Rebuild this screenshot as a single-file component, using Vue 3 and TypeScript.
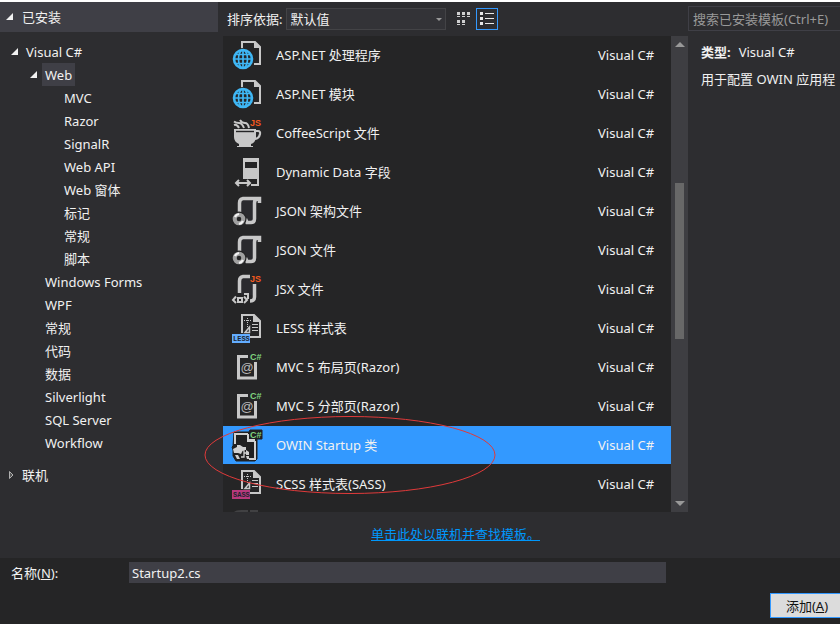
<script setup lang="ts">
import { ref } from 'vue'

type IconKind =
  | 'globe' | 'coffee' | 'field' | 'json' | 'jsx' | 'less'
  | 'razor' | 'owin' | 'sass'

interface Template { name: string; icon: IconKind }
interface TreeNode { label: string; level: number; open?: boolean }

const tree: TreeNode[] = [
  { label: 'Visual C#', level: 0, open: true },
  { label: 'Web', level: 1, open: true },
  { label: 'MVC', level: 2 },
  { label: 'Razor', level: 2 },
  { label: 'SignalR', level: 2 },
  { label: 'Web API', level: 2 },
  { label: 'Web 窗体', level: 2 },
  { label: '标记', level: 2 },
  { label: '常规', level: 2 },
  { label: '脚本', level: 2 },
  { label: 'Windows Forms', level: 1 },
  { label: 'WPF', level: 1 },
  { label: '常规', level: 1 },
  { label: '代码', level: 1 },
  { label: '数据', level: 1 },
  { label: 'Silverlight', level: 1 },
  { label: 'SQL Server', level: 1 },
  { label: 'Workflow', level: 1 },
]

const templates: Template[] = [
  { name: 'ASP.NET 处理程序', icon: 'globe' },
  { name: 'ASP.NET 模块', icon: 'globe' },
  { name: 'CoffeeScript 文件', icon: 'coffee' },
  { name: 'Dynamic Data 字段', icon: 'field' },
  { name: 'JSON 架构文件', icon: 'json' },
  { name: 'JSON 文件', icon: 'json' },
  { name: 'JSX 文件', icon: 'jsx' },
  { name: 'LESS 样式表', icon: 'less' },
  { name: 'MVC 5 布局页(Razor)', icon: 'razor' },
  { name: 'MVC 5 分部页(Razor)', icon: 'razor' },
  { name: 'OWIN Startup 类', icon: 'owin' },
  { name: 'SCSS 样式表(SASS)', icon: 'sass' },
]

const activeNode = ref(1)
const selected = ref(10)
const fileName = ref('Startup2.cs')
const sort = ref('default')
const query = ref('')
const view = ref<'grid' | 'list'>('list')
</script>

<template>
  <div class="dialog">
    <div class="body">
      <aside class="sidebar">
        <button class="section installed" type="button">
          <svg class="caret" viewBox="0 0 8 8"><path d="M7 0V7H0Z" fill="#f1f1f1" /></svg>
          <span>已安装</span>
        </button>
        <ul class="tree">
          <li v-for="(node, i) in tree" :key="i" :class="['node', 'level-' + node.level]">
            <svg v-if="node.open" class="caret" viewBox="0 0 8 8"><path d="M7 0V7H0Z" fill="#f1f1f1" /></svg>
            <span v-else class="caret"></span>
            <button type="button" :class="['label', { active: activeNode === i }]" @click="activeNode = i">{{ node.label }}</button>
          </li>
        </ul>
        <button class="section online" type="button">
          <svg class="caret" viewBox="0 0 8 8"><path d="M3.500 0.500V7.500L7 4Z" fill="#555" stroke="#b0b0b0" /></svg>
          <span>联机</span>
        </button>
      </aside>

      <main class="center">
        <div class="toolbar">
          <label for="sort">排序依据:</label>
          <div class="select">
            <select id="sort" v-model="sort"><option value="default">默认值</option></select>
            <svg class="drop" viewBox="0 0 6 3"><path d="M0 0H6L3 3Z" fill="#999" /></svg>
          </div>
          <button type="button" aria-label="小图标" :class="['view', { on: view === 'grid' }]" @click="view = 'grid'">
            <svg viewBox="0 0 14 14" fill="#d0d0d0" shape-rendering="crispEdges">
              <path d="M0 0h3v3H0zM5 0h3v3H5zM10 0h3v3h-3zM0 4h3v1H0zM5 4h3v1H5zM10 4h3v1h-3zM0 8h3v3H0zM5 8h3v3H5zM0 12h3v1H0zM5 12h3v1H5z" />
            </svg>
          </button>
          <button type="button" aria-label="列表" :class="['view', { on: view === 'list' }]" @click="view = 'list'">
            <svg viewBox="0 0 14 14" fill="#e8e8e8" shape-rendering="crispEdges">
              <path d="M0 0h3v3H0zM5 1h9v1H5zM0 5h3v3H0zM5 6h9v1H5zM0 10h3v3H0zM5 11h9v1H5z" />
            </svg>
          </button>
        </div>

        <div class="listing">
          <ul class="items">
            <li v-for="(item, i) in templates" :key="i">
              <button type="button" :class="['item', { selected: selected === i }]" @click="selected = i">
                <svg class="icon" viewBox="0 0 32 38" fill="none">
                  <g v-if="item.icon === 'globe'">
                    <path d="M11 13V6H24L29 11V28H23" stroke="#c8c8c8" stroke-width="2" />
                    <path d="M23 5L30 12H23Z" fill="#c8c8c8" />
                    <circle cx="12" cy="23" r="11" fill="#252526" />
                    <g stroke="#3fb7f5" stroke-width="1.7">
                      <circle cx="12" cy="23" r="9" stroke-width="2.6" />
                      <ellipse cx="12" cy="23" rx="4.5" ry="9" />
                      <path d="M12 14V32M3 23H21M4.5 18.5H19.5M4.5 27.5H19.5" />
                    </g>
                  </g>
                  <g v-else-if="item.icon === 'coffee'">
                    <path d="M3 15H25V24Q24 29 20 30V32H22V33H6V32H8V30Q3 28 3 23Z" fill="#c8c8c8" />
                    <path d="M5 17.500H23" stroke="#252526" stroke-width="1.4" />
                    <path d="M25 17H27Q29.500 17 29 20Q28 24.500 24 25" stroke="#c8c8c8" stroke-width="2.2" />
                    <path d="M3 7.500Q5 9 8 9T13 14M9 6Q11 9 14 9T18 14M3 11Q6 10 8 14" stroke="#c8c8c8" stroke-width="2" />
                    <text x="19" y="12" class="badge js">JS</text>
                  </g>
                  <g v-else-if="item.icon === 'field'">
                    <path d="M12 5H28V33H20V31H26V26H12ZM14 9V15H26V9Z" fill="#c8c8c8" fill-rule="evenodd" />
                    <path d="M5 30H19M8 27L5 30L8 33M16 27L19 30L16 33" stroke="#c8c8c8" stroke-width="2" />
                  </g>
                  <g v-else-if="item.icon === 'json'">
                    <path d="M10 8H22V30H16L10 22Z" fill="#2a2a2e" />
                    <path d="M8.500 20V11Q8.500 7 12 6.500H28.500V11M27 7Q23.500 7 23.500 11V27Q23.500 30.500 20 30.500H16L14.500 27" stroke="#c8c8c8" stroke-width="3.500" />
                    <circle cx="8" cy="27" r="7.500" fill="#252526" />
                    <circle cx="8" cy="27" r="4.300" stroke="#a0a0a0" stroke-width="4" />
                    <path d="M4 25Q5 22.500 8 22M12 29Q11 31 8 32" stroke="#f4f4f4" stroke-width="2.200" />
                  </g>
                  <g v-else-if="item.icon === 'jsx'">
                    <path d="M10 8H22V25H10Z" fill="#2a2a2e" />
                    <path d="M8.500 23V11Q8.500 7 12 6.500H19" stroke="#c8c8c8" stroke-width="3.500" />
                    <path d="M23.500 14V27Q23.500 31 19 31" stroke="#c8c8c8" stroke-width="3.500" />
                    <path d="M13 24H17V29" stroke="#c8c8c8" stroke-width="2" />
                    <path d="M5 26.500L2 30L5 33M13 26.500L16 30L13 33" stroke="#c8c8c8" stroke-width="2" />
                    <path d="M7 28H11V32H7Z" stroke="#c8c8c8" stroke-width="2" />
                    <text x="19" y="12" class="badge js">JS</text>
                  </g>
                  <g v-else-if="item.icon === 'less' || item.icon === 'sass'">
                    <path d="M11 24V6H23L29 12V28H19" stroke="#c8c8c8" stroke-width="2" />
                    <path d="M22 5L30 13H22Z" fill="#c8c8c8" />
                    <path d="M16.500 9V18M13 11.500H21" stroke="#c8c8c8" stroke-width="1" stroke-dasharray="1 1" />
                    <path d="M21 15.500H27M21 18.500H27M21 21.500H27" stroke="#c8c8c8" stroke-width="1.200" />
                    <path d="M14 23.500L18.500 18V23.500Z" stroke="#c8c8c8" stroke-width="1.500" />
                    <rect x="1" y="25" width="18" height="9" :fill="item.icon === 'less' ? '#63adff' : '#b8397c'" />
                    <text x="2" y="32" class="tag">{{ item.icon === 'less' ? 'LESS' : 'SASS' }}</text>
                  </g>
                  <g v-else-if="item.icon === 'razor'">
                    <path d="M17 8.500H7.500V30H24.500V14" stroke="#c8c8c8" stroke-width="3" />
                    <text x="16" y="24" class="at">@</text>
                    <text x="19" y="12" class="badge cs">C#</text>
                  </g>
                  <g v-else>
                    <path d="M3 6H18L19 4H31V13H26V33L24 35H5L2 30V24L1 21L2 20Z" fill="#202021" stroke="#202021" stroke-linejoin="round" />
                    <path d="M4 18V8H17M24 15V33H18" stroke="#d0d0d0" stroke-width="2" />
                    <path d="M16 8H18V13H24V16H16Z" fill="#d0d0d0" />
                    <path d="M2 23L6 21V19L9 19L12 21L15 21V24L12 24L10 28L7 27L3 27Z" fill="#d0d0d0" />
                    <path d="M10 24H13V31H10M13 27H16" stroke="#d0d0d0" stroke-width="1.300" />
                    <path d="M15 24L18 26V29H15ZM15 30H18V33H16Z" fill="#d0d0d0" />
                    <path d="M4 29L7 29L9 33H6Z" fill="#d0d0d0" />
                    <text x="19" y="12" class="badge cs">C#</text>
                  </g>
                </svg>
                <span class="name">{{ item.name }}</span>
                <span class="lang">Visual C#</span>
              </button>
            </li>
            <li class="peek">
              <svg class="icon" viewBox="0 0 32 38"><path d="M3 8Q5 6 10 6H17V8ZM19 6H27V8H19Z" fill="#414143" /></svg>
            </li>
          </ul>
          <div class="scrollbar">
            <svg viewBox="0 0 10 5"><path d="M5 0L10 5H0Z" fill="#999" /></svg>
            <div class="track"><div class="thumb"></div></div>
            <svg viewBox="0 0 10 5"><path d="M0 0H10L5 5Z" fill="#999" /></svg>
          </div>
          <svg class="ring" viewBox="0 0 292 80" fill="none">
            <ellipse cx="146" cy="40" rx="145" ry="38.500" stroke="#e03a3a" />
          </svg>
        </div>

        <div class="more"><a href="#">单击此处以联机并查找模板。</a></div>
      </main>

      <aside class="details">
        <input v-model="query" class="search" type="text" aria-label="搜索已安装模板" placeholder="搜索已安装模板(Ctrl+E)">
        <p class="kind"><b>类型:</b><span>Visual C#</span></p>
        <p class="desc">用于配置 OWIN 应用程</p>
      </aside>
    </div>

    <footer class="footer">
      <div class="name-row">
        <label for="name">名称(<u>N</u>):</label>
        <input id="name" v-model="fileName" type="text">
      </div>
      <div class="actions"><button type="button" class="add">添加(<u>A</u>)</button></div>
    </footer>
  </div>
</template>

<style>
body {
  background: #2d2d30;
}
</style>

<style scoped>
.dialog {
  box-sizing: border-box;
  min-height: 100vh;
  display: flex;
  flex-direction: column;
  overflow: hidden;
  border-top: 2px solid #fff;
  background: #2d2d30;
  color: #f1f1f1;
  font: 13px/22px "Noto Sans", "Noto Sans CJK SC", sans-serif;
}
button, input, select {
  box-sizing: border-box;
  margin: 0;
  padding: 0;
  border: 0;
  border-radius: 0;
  background: none;
  color: inherit;
  font: inherit;
}
ul, p { margin: 0; padding: 0; list-style: none; }

.body {
  flex: 1;
  display: grid;
  grid-template-columns: 223px minmax(0, 1fr) 152px;
}

.sidebar { padding-right: 5px; }
.section {
  display: flex;
  align-items: center;
  gap: 8px;
  width: 100%;
  height: 30px;
  padding-left: 6px;
}
.caret { width: 8px; height: 8px; flex: none; }
.installed { background: #3f3f46; }
.tree { padding: 8px 0 6px; }
.node { display: flex; align-items: center; height: 23px; gap: 4px; }
.level-0 { padding-left: 11px; }
.level-1 { padding-left: 30px; }
.level-2 { padding-left: 49px; }
.label { height: 23px; padding: 0 3px; white-space: nowrap; text-align: left; }
.label.active { background: #3f3f46; }

.center { display: flex; flex-direction: column; }
.toolbar {
  display: flex;
  align-items: center;
  height: 34px;
  padding-left: 4px;
}
.select {
  display: flex;
  align-items: center;
  width: 160px;
  height: 22px;
  margin: 0 7px 0 4px;
  position: relative;
}
.select select {
  width: 100%;
  height: 100%;
  padding-left: 3px;
  border: 1px solid #434346;
  background: #333337;
  appearance: none;
  line-height: 18px;
}
.drop { position: absolute; right: 4px; width: 6px; height: 3px; pointer-events: none; }
.view {
  display: flex;
  align-items: center;
  justify-content: center;
  width: 22px;
  height: 22px;
  border: 1px solid transparent;
}
.view + .view { margin-left: 1px; }
.view.on { border-color: #3399ff; }
.view svg { width: 14px; height: 14px; flex: none; }

.listing { flex: 1; display: flex; position: relative; min-height: 476px; }
.items { flex: 1; background: #252526; overflow: hidden; height: 476px; }
.items li { height: 39px; }
.item {
  display: flex;
  align-items: center;
  width: 100%;
  height: 38px;
  padding: 0 15px 0 8px;
  text-align: left;
  white-space: nowrap;
}
.item.selected { background: #3399ff; }
.icon { width: 32px; height: 38px; flex: none; }
.name { flex: 1; padding-left: 13px; }
.lang { width: 58px; }
.peek { padding-left: 8px; }
.badge { font: bold 9px "Liberation Sans", sans-serif; }
.js { fill: #f4591f; }
.cs { fill: #7fd37f; }
.tag { font: bold 7px "Liberation Mono", monospace; fill: #1b2430; }
.at { font: 13px "Liberation Sans", sans-serif; fill: #b8b8b8; text-anchor: middle; }

.scrollbar {
  display: flex;
  flex-direction: column;
  align-items: center;
  width: 17px;
  padding: 6px 0;
  box-sizing: border-box;
  background: #3e3e42;
}
.scrollbar svg { width: 10px; height: 5px; flex: none; }
.track { flex: 1; display: flex; flex-direction: column; padding-top: 136px; }
.thumb { width: 9px; height: 156px; background: #686868; }
.ring {
  position: absolute;
  left: -19px;
  top: 379px;
  width: 292px;
  height: 80px;
  pointer-events: none;
}

.more { height: 46px; line-height: 44px; text-align: center; }
.more a { color: #0097fb; }

.details { min-width: 0; overflow: hidden; white-space: nowrap; padding-top: 4px; }
.search {
  display: block;
  width: 100%;
  height: 25px;
  padding-left: 4px;
  border: 1px solid #3f3f46;
  border-right: 0;
}
.search::placeholder { color: #999; opacity: 1; }
.kind { display: flex; gap: 8px; padding: 10px 0 5px 13px; }
.desc { padding-left: 13px; }

.footer { background: #252526; padding: 4px 0 6px; }
.name-row { display: flex; align-items: center; height: 21px; }
.name-row label { width: 129px; padding-left: 11px; box-sizing: border-box; }
.name-row input {
  flex: 1;
  height: 21px;
  margin-right: 174px;
  padding-left: 3px;
  background: #3f3f46;
}
.actions { display: flex; justify-content: flex-end; padding-top: 10px; }
.add {
  width: 70px;
  height: 25px;
  padding-left: 3px;
  border: 1px solid #3399ff;
  border-right: 0;
  background: #dcdcdc;
  color: #111;
}
</style>
